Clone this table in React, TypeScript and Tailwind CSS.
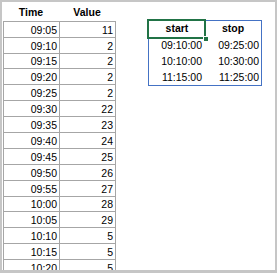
const readings: [string, number][] = [
  ['09:05', 11],
  ['09:10', 2],
  ['09:15', 2],
  ['09:20', 2],
  ['09:25', 2],
  ['09:30', 22],
  ['09:35', 23],
  ['09:40', 24],
  ['09:45', 25],
  ['09:50', 26],
  ['09:55', 27],
  ['10:00', 28],
  ['10:05', 29],
  ['10:10', 5],
  ['10:15', 5],
  ['10:20', 5],
];

const ranges = [
  ['09:10:00', '09:25:00'],
  ['10:10:00', '10:30:00'],
  ['11:15:00', '11:25:00'],
];

const font = { fontFamily: '"Liberation Sans", Arial, sans-serif' };

function ReadingsTable() {
  return (
    <div className="flex flex-col pt-[3px] pl-px">
      <div className="flex h-4 items-center font-bold text-[10.5px] text-black">
        <div className="w-[56px] text-center">Time</div>
        <div className="w-[56px] text-center">Value</div>
      </div>
      <div className="border-t border-[#a6a6a6]">
        {readings.map(([time, value]) => (
          <div key={time} className="flex h-[15.9px] text-[10.5px] leading-none text-black">
            <div className="w-[56px] border-l border-b border-[#a6a6a6] flex items-end justify-end pr-[2px] pb-[1.5px]">
              {time}
            </div>
            <div className="w-[57px] border-l border-r border-b border-[#a6a6a6] flex items-end justify-end pr-[2px] pb-[1.5px]">
              {value}
            </div>
          </div>
        ))}
      </div>
    </div>
  );
}

function RangesTable() {
  return (
    <div className="mt-[18px] ml-[32px] self-start relative border border-[#4472c4] w-[114px] text-[10.5px] text-black">
      <div className="flex h-4 items-center font-bold">
        <div className="w-[56px] text-center">start</div>
        <div className="w-[56px] text-center">stop</div>
      </div>
      {ranges.map(([start, stop]) => (
        <div key={start} className="flex h-4 items-center leading-none">
          <div className="w-[56px] text-right pr-[3px]">{start}</div>
          <div className="w-[56px] text-right pr-[2px]">{stop}</div>
        </div>
      ))}
      {/* active cell outline with fill handle */}
      <div className="absolute left-[-2px] top-[-2px] w-[59px] h-[20px] border-2 border-[#217346]">
        <div className="absolute right-[-5px] bottom-[-5px] w-[6px] h-[6px] bg-[#217346] border border-white" />
      </div>
    </div>
  );
}

export default function App() {
  return (
    <div
      className="w-[277px] h-[273px] overflow-hidden bg-white border-t-2 border-l-2 border-r-2 border-b-[3px] border-[#c6c6c6] flex"
      style={font}
    >
      <ReadingsTable />
      <RangesTable />
    </div>
  );
}
